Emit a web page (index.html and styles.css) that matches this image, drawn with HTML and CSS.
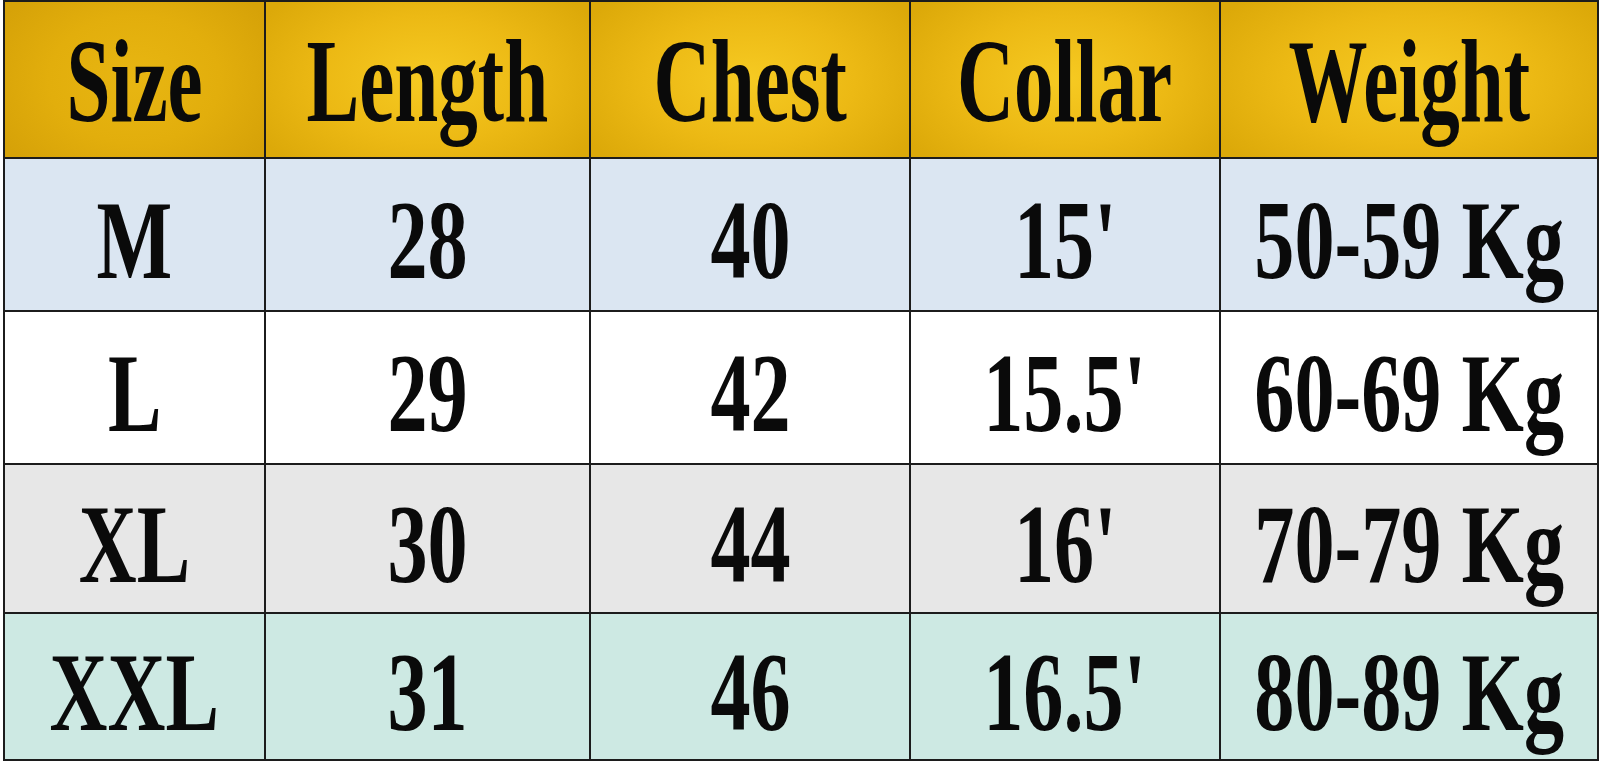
FILE: index.html
```html
<!DOCTYPE html>
<html lang="en">
<head>
<meta charset="utf-8">
<title>Size Chart</title>
<link rel="stylesheet" href="styles.css">
</head>
<body>
<div class="chart">
  <div class="cell head head-first"><span class="t">Size</span></div>
  <div class="cell head"><span class="t">Length</span></div>
  <div class="cell head"><span class="t">Chest</span></div>
  <div class="cell head"><span class="t">Collar</span></div>
  <div class="cell head"><span class="t">Weight</span></div>

  <div class="cell row-m"><span class="t">M</span></div>
  <div class="cell row-m"><span class="t">28</span></div>
  <div class="cell row-m"><span class="t">40</span></div>
  <div class="cell row-m"><span class="t">15'</span></div>
  <div class="cell row-m"><span class="t">50-59 Kg</span></div>

  <div class="cell row-l"><span class="t">L</span></div>
  <div class="cell row-l"><span class="t">29</span></div>
  <div class="cell row-l"><span class="t">42</span></div>
  <div class="cell row-l"><span class="t">15.5'</span></div>
  <div class="cell row-l"><span class="t">60-69 Kg</span></div>

  <div class="cell row-xl"><span class="t">XL</span></div>
  <div class="cell row-xl"><span class="t">30</span></div>
  <div class="cell row-xl"><span class="t">44</span></div>
  <div class="cell row-xl"><span class="t">16'</span></div>
  <div class="cell row-xl"><span class="t">70-79 Kg</span></div>

  <div class="cell row-xxl"><span class="t">XXL</span></div>
  <div class="cell row-xxl"><span class="t">31</span></div>
  <div class="cell row-xxl"><span class="t">46</span></div>
  <div class="cell row-xxl"><span class="t">16.5'</span></div>
  <div class="cell row-xxl"><span class="t">80-89 Kg</span></div>
</div>
</body>
</html>
```
FILE: styles.css
```css
html, body {
  margin: 0;
  padding: 0;
  background: #ffffff;
}
body {
  padding: 0 1px 1px 3px;
  font-family: "Liberation Serif", "Times New Roman", serif;
  font-weight: bold;
  color: #0a0a0a;
}
.chart {
  display: grid;
  grid-template-columns: 259px 323px 318px 308px 376px;
  grid-template-rows: 155px 151px 151px 147px 145px;
  gap: 2px;
  background: #1c1c1c;
  border: 2px solid #1c1c1c;
  width: max-content;
}
.cell {
  display: flex;
  align-items: center;
  justify-content: center;
  overflow: hidden;
  font-size: 113px;
  line-height: 1;
  padding-top: 10px;
  box-sizing: border-box;
}
.cell .t {
  display: inline-block;
  white-space: nowrap;
  transform: scaleX(0.71);
}
.head {
  font-size: 118px;
  padding-top: 5px;
  background: radial-gradient(ellipse 60% 75% at 50% 50%, #f6ca22 0%, #ecb914 55%, #dca909 100%);
}
.head .t {
  transform: scaleX(0.67);
}
.head-first {
  background: radial-gradient(ellipse 60% 75% at 50% 50%, #e8b612 0%, #e2ae0c 55%, #d6a208 100%);
}
.row-m { background: #dbe6f2; }
.row-l { background: #ffffff; }
.row-xl { background: #e7e7e7; }
.row-xxl { background: #cde9e3; }
```
